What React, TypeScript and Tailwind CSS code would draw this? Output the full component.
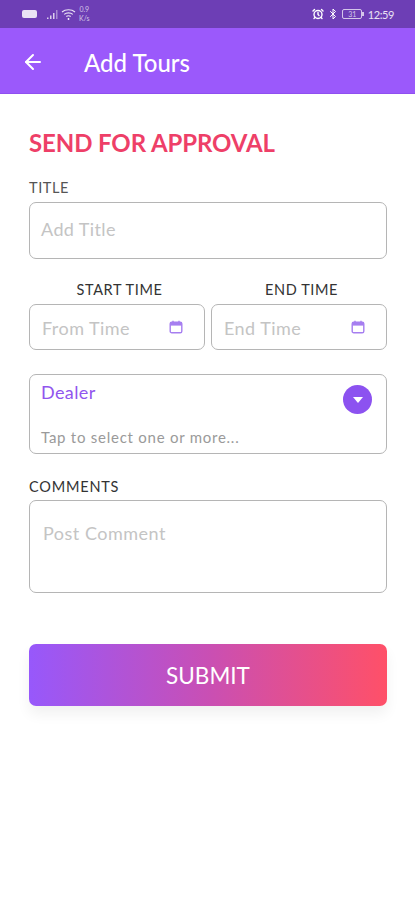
import { ArrowLeft, Bluetooth, AlarmClock } from 'lucide-react';

const font = { fontFamily: 'Lato, "Noto Sans", sans-serif' };

function StatusBar() {
  return (
    <div className="h-[28px] bg-[#6d3eb5] flex items-center justify-between pl-[22px] pr-[21px] text-white">
      <div className="flex items-center">
        {/* hd badge */}
        <div className="w-[15px] h-[8px] bg-white/85 rounded-[2px]" />
        <svg width="12" height="11" viewBox="0 0 12 11" className="ml-[9px]">
          <path d="M1 10h1.5V8.5H1zM4 10h1.5V6.5H4zM7 10h1.5V4H7z" fill="#ffffff" fillOpacity="0.75" />
          <path d="M10 10h1.5V1H10z" fill="#ffffff" fillOpacity="0.4" />
        </svg>
        <svg width="15" height="13" viewBox="0 0 15 13" fill="none" stroke="#ffffff" strokeWidth="1.2" strokeOpacity="0.85" className="ml-[3px]">
          <path d="M1 4c3.5-3 9.5-3 13 0M3.2 6.4c2.4-2 6.2-2 8.6 0M5.3 8.6c1.3-1 3.1-1 4.4 0" />
          <circle cx="7.5" cy="11" r="0.9" fill="#ffffff" stroke="none" />
        </svg>
        <div className="ml-[3px] text-[7px] leading-[9px] text-white/70 text-center">
          <div>0.9</div>
          <div>K/s</div>
        </div>
      </div>
      <div className="flex items-center">
        <AlarmClock size={12} strokeWidth={2.8} />
        <Bluetooth size={12} strokeWidth={2} className="ml-[3px]" />
        <div className="ml-[3px] w-[20px] h-[10px] border border-white/70 rounded-[2px] text-[7px] leading-[8px] text-center text-white/70">
          31
        </div>
        <div className="w-[1.5px] h-[4px] bg-white/70" />
        <span className="ml-[4px] text-[11px] leading-none tracking-[-0.4px] text-white/85">12:59</span>
      </div>
    </div>
  );
}

function CalendarIcon() {
  return (
    <svg width="14" height="14" viewBox="0 0 14 14" fill="none" className="shrink-0">
      <rect x="1.2" y="2.2" width="11.6" height="10.6" rx="1.6" stroke="#a67ef0" strokeWidth="1.4" />
      <rect x="1.2" y="2.2" width="11.6" height="3.4" fill="#a67ef0" />
      <path d="M4 .8v2M10 .8v2" stroke="#a67ef0" strokeWidth="1.4" />
    </svg>
  );
}

function TimeField({ label, placeholder }: { label: string; placeholder: string }) {
  return (
    <div className="flex-1">
      <div className="pl-[5px] text-center text-[14.5px] leading-[18px] tracking-[0.6px] text-[#333333]">{label}</div>
      <div className="mt-[5px] h-[46px] border border-[#b5b5b5] rounded-[7px] flex items-center justify-between pl-[12px] pr-[21px]">
        <span className="text-[18px] tracking-[0.45px] text-[#c4c4c4] mt-[2px]">{placeholder}</span>
        <CalendarIcon />
      </div>
    </div>
  );
}

export default function App() {
  return (
    <div className="w-[415px] h-[900px] bg-white overflow-hidden" style={font}>
      <StatusBar />

      {/* Header */}
      <div className="h-[66px] bg-[#9b59fb] border-b border-[#8f4ff0] flex items-center text-white">
        <ArrowLeft size={24} strokeWidth={2} className="ml-[21px] mt-[3px]" />
        <h1 className="ml-[39px] text-[24px] font-medium leading-none mt-[4px]">Add Tours</h1>
      </div>

      <div className="pl-[29px] pr-[28px]">
        <h2 className="mt-[34px] text-[24px] leading-[30px] font-bold tracking-[-0.1px] text-[#ee3f68]">SEND FOR APPROVAL</h2>

        <div className="mt-[21px] text-[14.5px] leading-[18px] tracking-[0.6px] text-[#555555]">TITLE</div>
        <div className="mt-[5px] h-[57px] border border-[#b5b5b5] rounded-[7px] flex items-center px-[11px]">
          <span className="text-[18px] tracking-[0.4px] text-[#c4c4c4] mb-[3px]">Add Title</span>
        </div>

        <div className="mt-[22px] flex gap-[6px]">
          <TimeField label="START TIME" placeholder="From Time" />
          <TimeField label="END TIME" placeholder="End Time" />
        </div>

        {/* Dealer select */}
        <div className="relative mt-[24px] h-[80px] border border-[#b5b5b5] rounded-[7px] pl-[11px]">
          <div className="mt-[5px] text-[18px] leading-[24px] tracking-[0.4px] text-[#9155ee]">Dealer</div>
          <div className="mt-[24px] text-[15px] leading-[18px] tracking-[0.75px] text-[#9a9a9a]">Tap to select one or more...</div>
          <div className="absolute right-[14px] top-[10px] w-[29px] h-[29px] rounded-full bg-[#8c52f0] flex items-center justify-center">
            <div className="w-0 h-0 border-x-[5px] border-x-transparent border-t-[6px] border-t-white" />
          </div>
        </div>

        <div className="mt-[24px] text-[14.5px] leading-[18px] tracking-[0.8px] text-[#333333]">COMMENTS</div>
        <div className="mt-[4px] h-[93px] border border-[#b5b5b5] rounded-[7px] px-[13px] pt-[20px]">
          <span className="block text-[18px] leading-[24px] tracking-[0.5px] text-[#c4c4c4]">Post Comment</span>
        </div>

        <button className="mt-[51px] w-full h-[62px] pt-[1px] rounded-[7px] bg-[linear-gradient(to_right,#9758fb,#c94fb4,#ff5068)] text-white text-[22.5px] shadow-[0_8px_14px_rgba(0,0,0,0.06)]">
          SUBMIT
        </button>
      </div>
    </div>
  );
}
